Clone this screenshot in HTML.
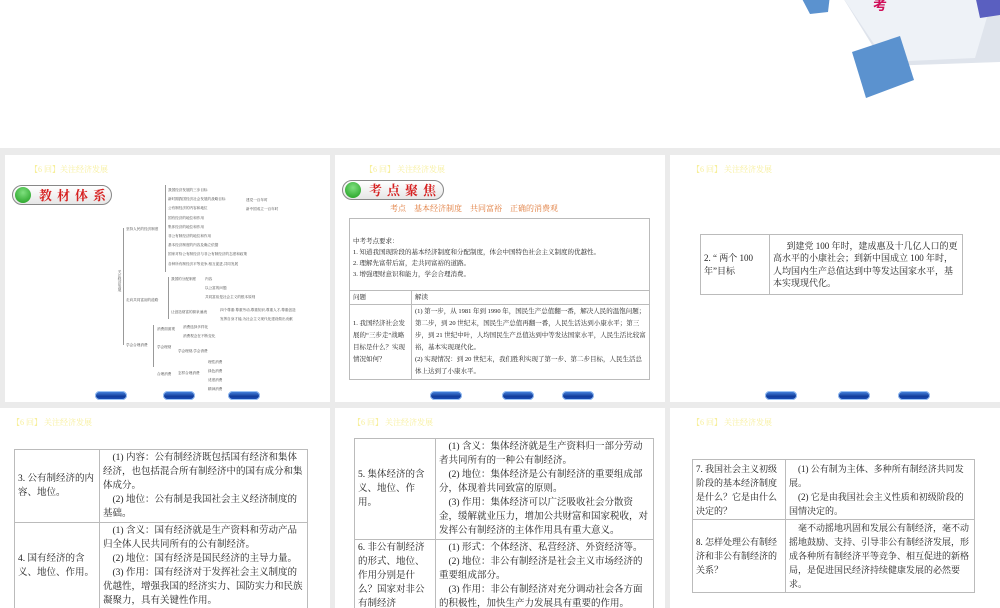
<!DOCTYPE html><html><head><meta charset="utf-8"><style>
body{margin:0;width:1000px;height:600px;background:#ebebeb;position:relative;overflow:hidden;font-family:"Liberation Serif","Noto Serif CJK SC","Noto Sans CJK SC",serif;color:#222}
.s{position:absolute;background:#fff;overflow:hidden}
.hd{position:absolute;left:25px;top:9px;font-size:8px;color:#f7ef9a}
table{position:absolute;border-collapse:collapse;font-size:9.5px;line-height:14px}
td{border:1px solid #bbb;padding:1px 3px;vertical-align:middle}
.btn{position:absolute;width:32px;height:9px;border-radius:5px;background:linear-gradient(#4d8ee8,#123c9a 60%,#1d54c0);box-shadow:0 0 0 1px #9cc3f5 inset;top:236px}
.ti{position:absolute;height:20px;border:1px solid #888;border-radius:11px;background:linear-gradient(#fff,#e6e6e6);font-size:13px;font-weight:bold;color:#d62020;letter-spacing:5px;line-height:19px;box-sizing:border-box;white-space:nowrap}
.ti i{display:inline-block;width:16px;height:16px;border-radius:50%;background:radial-gradient(circle at 50% 35%,#7fe07f,#1a9a1a);vertical-align:top;margin:1px 8px 0 2px}
.mm{position:absolute;font-size:3.6px;color:#444;white-space:nowrap}
.l{position:absolute;background:#999}
</style></head><body>
<div class="s" style="left:0;top:0;width:1000px;height:148px">
<svg width="1000" height="148" style="position:absolute;left:0;top:0">
<polygon points="832,-20 1000,-20 1000,62 885,66" fill="#dfe4ec"/>
<polygon points="838,-10 995,-10 975,58 886,62" fill="#eef2f7"/>
<polygon points="852,52 900,36 914,80 866,98" fill="#5b92cf"/>
<polygon points="800,-5 830,-5 828,12 810,14" fill="#5b92cf"/>
<polygon points="975,-5 1000,-5 1000,15 980,18" fill="#5a5fc0"/>
<text x="873" y="10" font-size="14" fill="#d0105a" font-weight="bold" font-family="Noto Sans CJK SC">考</text>
</svg></div>

<!-- slide 1 -->
<div class="s" style="left:5px;top:155px;width:325px;height:247px">
<div class="hd">【6 回】关注经济发展</div>
<div class="ti" style="left:7px;top:30px;width:100px"><i></i>教材体系</div>
<div class="l" style="left:118px;top:73px;width:1px;height:117px"></div>
<div class="l" style="left:160px;top:30px;width:1px;height:87px"></div>
<div class="l" style="left:163px;top:122px;width:1px;height:42px"></div>
<div class="l" style="left:148px;top:170px;width:1px;height:42px"></div>
<div class="mm" style="left:113px;top:115px;writing-mode:vertical-rl">关注经济发展</div>
<div class="mm" style="left:121px;top:72px">坚持人民的经济制度</div>
<div class="mm" style="left:121px;top:143px">走向共同富裕的道路</div>
<div class="mm" style="left:121px;top:188px">学会合理消费</div>
<div class="mm" style="left:163px;top:31px;line-height:9.2px">我国经济发展的三步目标<br>新时期我国经济社会发展的战略目标<br>公有制经济的内容和地位<br>国有经济的地位和作用<br>集体经济的地位和作用<br>非公有制经济的地位和作用<br>基本经济制度的内容及确立依据<br>国家对待公有制经济与非公有制经济的态度和政策<br>各种所有制经济平等竞争,相互促进,共同发展</div>
<div class="mm" style="left:166px;top:122px">我国的分配制度</div>
<div class="mm" style="left:166px;top:155px">让创造财富的源泉涌流</div>
<div class="mm" style="left:200px;top:120px;line-height:9px">内容<br>以公富的问题<br>共同富裕是社会主义的根本原则</div>
<div class="mm" style="left:215px;top:151px;line-height:9px">四个尊重:尊重劳动,尊重知识,尊重人才,尊重创造<br>发挥自身才能,为社会主义现代化建设做出贡献</div>
<div class="mm" style="left:152px;top:170px;line-height:9px">消费面面观<br><br>学会理财<br><br><br>合理消费</div>
<div class="mm" style="left:178px;top:168px;line-height:9px">消费选择多样化<br>消费观念在不断变化</div>
<div class="mm" style="left:173px;top:194px">学会理财,学会消费</div>
<div class="mm" style="left:173px;top:216px">怎样合理消费</div>
<div class="mm" style="left:203px;top:203px;line-height:9px">理性消费<br>绿色消费<br>适度消费<br>精神消费</div>
<div class="mm" style="left:241px;top:41px;line-height:9px">建党一百年时<br>新中国成立一百年时</div>
<div class="btn" style="left:90px"></div><div class="btn" style="left:158px"></div><div class="btn" style="left:223px"></div>
</div>

<!-- slide 2 -->
<div class="s" style="left:335px;top:155px;width:330px;height:247px">
<div class="hd" style="left:30px">【6 回】 关注经济发展</div>
<div class="ti" style="left:7px;top:25px;width:102px"><i></i>考点聚焦</div>
<div style="position:absolute;left:55px;top:48px;font-size:8px;color:#e07a3a;word-spacing:6px;white-space:nowrap">考点　基本经济制度　共同富裕　正确的消费观</div>
<table style="left:14px;top:63px;width:301px;font-size:6.5px;line-height:11px">
<tr><td colspan="2" style="height:62px;padding-top:8px">中考考点要求：<br>1. 知道我国现阶段的基本经济制度和分配制度，体会中国特色社会主义制度的优越性。<br>2. 理解先富带后富，走共同富裕的道路。<br>3. 增强理财意识和能力，学会合理消费。</td></tr>
<tr><td style="width:55px">问题</td><td>解读</td></tr>
<tr><td style="line-height:12px">1. 我国经济社会发展的“三步走”战略目标是什么？实现情况如何？</td><td style="line-height:12px">(1) 第一步，从 1981 年到 1990 年，国民生产总值翻一番，解决人民的温饱问题；第二步，到 20 世纪末，国民生产总值再翻一番，人民生活达到小康水平；第三步，到 21 世纪中叶，人均国民生产总值达到中等发达国家水平，人民生活比较富裕，基本实现现代化。<br>(2) 实现情况：到 20 世纪末，我们胜利实现了第一步、第二步目标，人民生活总体上达到了小康水平。</td></tr>
</table>
<div class="btn" style="left:95px"></div><div class="btn" style="left:167px"></div><div class="btn" style="left:227px"></div>
</div>

<!-- slide 3 -->
<div class="s" style="left:670px;top:155px;width:330px;height:247px">
<div class="hd" style="left:22px">【6 回】 关注经济发展</div>
<table style="left:30px;top:79px;width:263px;font-size:9px;line-height:12.5px">
<tr><td style="width:62px;height:57px">2. “ 两个 100 年”目标</td><td style="text-indent:1.5em">到建党 100 年时，建成惠及十几亿人口的更高水平的小康社会；到新中国成立 100 年时，人均国内生产总值达到中等发达国家水平，基本实现现代化。</td></tr>
</table>
<div class="btn" style="left:95px"></div><div class="btn" style="left:168px"></div><div class="btn" style="left:228px"></div>
</div>

<!-- slide 4 -->
<div class="s" style="left:0;top:408px;width:330px;height:200px">
<div class="hd" style="left:12px">【6 回】 关注经济发展</div>
<table style="left:14px;top:41px;width:294px">
<tr><td style="width:78px;height:70px">3. 公有制经济的内容、地位。</td><td>　(1) 内容：公有制经济既包括国有经济和集体经济，也包括混合所有制经济中的国有成分和集体成分。<br>　(2) 地位：公有制是我国社会主义经济制度的基础。</td></tr>
<tr><td>4. 国有经济的含义、地位、作用。</td><td>　(1) 含义：国有经济就是生产资料和劳动产品归全体人民共同所有的公有制经济。<br>　(2) 地位：国有经济是国民经济的主导力量。<br>　(3) 作用：国有经济对于发挥社会主义制度的优越性，增强我国的经济实力、国防实力和民族凝聚力，具有关键性作用。</td></tr>
</table></div>

<!-- slide 5 -->
<div class="s" style="left:335px;top:408px;width:330px;height:200px">
<div class="hd" style="left:18px">【6 回】 关注经济发展</div>
<table style="left:19px;top:30px;width:300px">
<tr><td style="width:74px;height:96px">5. 集体经济的含义、地位、作用。</td><td>　(1) 含义：集体经济就是生产资料归一部分劳动者共同所有的一种公有制经济。<br>　(2) 地位：集体经济是公有制经济的重要组成部分，体现着共同致富的原则。<br>　(3) 作用：集体经济可以广泛吸收社会分散资金，缓解就业压力，增加公共财富和国家税收，对发挥公有制经济的主体作用具有重大意义。</td></tr>
<tr><td>6. 非公有制经济的形式、地位、作用分别是什么？国家对非公有制经济</td><td>　(1) 形式：个体经济、私营经济、外资经济等。<br>　(2) 地位：非公有制经济是社会主义市场经济的重要组成部分。<br>　(3) 作用：非公有制经济对充分调动社会各方面的积极性，加快生产力发展具有重要的作用。</td></tr>
</table></div>

<!-- slide 6 -->
<div class="s" style="left:670px;top:408px;width:330px;height:200px">
<div class="hd" style="left:22px">【6 回】 关注经济发展</div>
<table style="left:22px;top:51px;width:283px;font-size:9px;line-height:14px">
<tr><td style="width:86px;height:57px">7. 我国社会主义初级阶段的基本经济制度是什么？它是由什么决定的？</td><td>　(1) 公有制为主体、多种所有制经济共同发展。<br>　(2) 它是由我国社会主义性质和初级阶段的国情决定的。</td></tr>
<tr><td>8. 怎样处理公有制经济和非公有制经济的关系？</td><td>　毫不动摇地巩固和发展公有制经济，毫不动摇地鼓励、支持、引导非公有制经济发展，形成各种所有制经济平等竞争、相互促进的新格局，是促进国民经济持续健康发展的必然要求。</td></tr>
</table></div>
</body></html>
